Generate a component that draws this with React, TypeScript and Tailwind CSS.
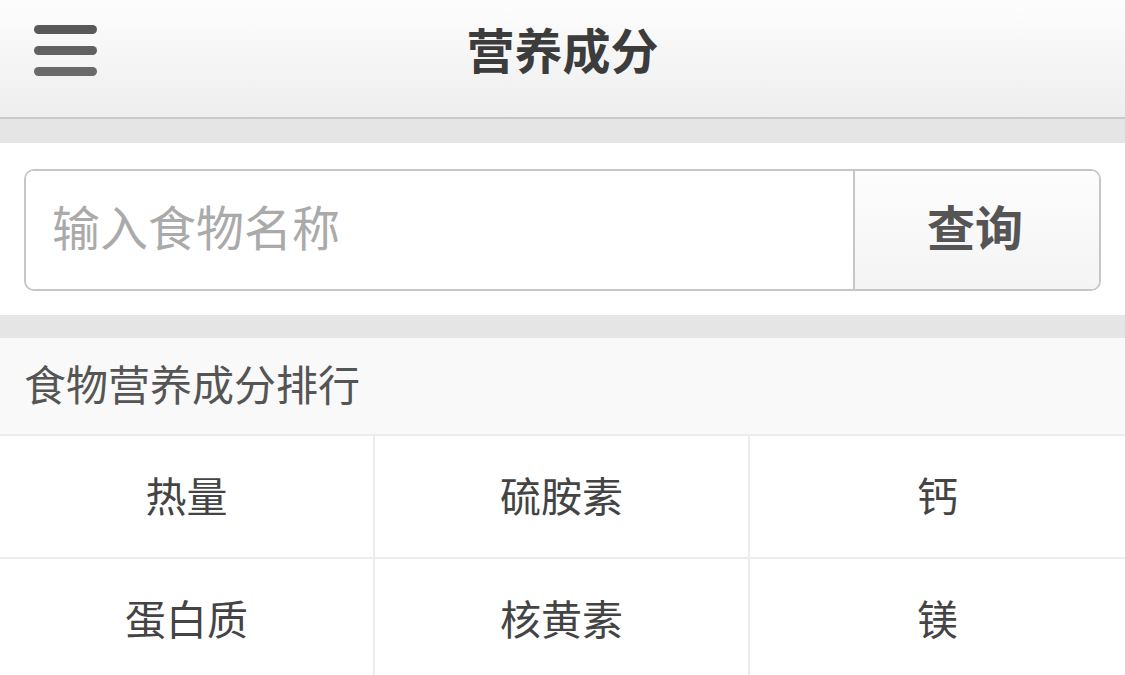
import React from 'react';

const items = ['热量', '硫胺素', '钙', '蛋白质', '核黄素', '镁'];

export default function App() {
  return (
    <div className="w-[1125px] h-[675px] overflow-hidden bg-white" style={{ fontFamily: '"Noto Sans CJK SC", "Noto Sans", sans-serif' }}>
      {/* Header */}
      <div className="relative h-[119px] flex items-center justify-center bg-gradient-to-b from-[#fdfdfd] to-[#eeeeee] border-b-2 border-[#c9c9c9]">
        <div className="absolute left-[34px] top-[25px] flex flex-col gap-[12px]">
          <div className="w-[63px] h-[9px] rounded-full bg-[#595959]" />
          <div className="w-[63px] h-[9px] rounded-full bg-[#616161]" />
          <div className="w-[63px] h-[9px] rounded-full bg-[#6a6a6a]" />
        </div>
        <h1 className="text-[48px] font-bold text-[#3c3c3c] leading-none -mt-[22px]">营养成分</h1>
      </div>

      <div className="h-[24px] bg-[#e5e5e5]" />

      {/* Search */}
      <div className="h-[172px] flex items-center px-[24px] pt-[2px]">
        <div className="flex w-[1077px] h-[122px] border-2 border-[#c6c6c6] rounded-[10px] overflow-hidden">
          <div className="flex-1 flex items-center pl-[26px] bg-white">
            <span className="text-[48px] text-[#aaaaaa] leading-none -mt-[10px]">输入食物名称</span>
          </div>
          <button className="w-[246px] border-l-2 border-[#c6c6c6] bg-gradient-to-b from-[#fdfdfd] to-[#f4f4f4] flex items-center justify-center">
            <span className="text-[48px] font-bold text-[#555555] leading-none -mt-[10px] -ml-[4px]">查询</span>
          </button>
        </div>
      </div>

      <div className="h-[23px] bg-[#e5e5e5]" />

      {/* Section title */}
      <div className="h-[98px] flex items-center px-[24px] bg-[#f9f9f9] border-b-2 border-[#ececec]">
        <span className="text-[42px] text-[#555555] leading-none -mt-[6px]">食物营养成分排行</span>
      </div>

      {/* Grid */}
      <div className="grid grid-cols-3">
        {items.map((t, i) => (
          <div
            key={t}
            className={`h-[123px] flex items-center justify-center border-b-2 border-[#ececec] ${i % 3 !== 2 ? 'border-r-2' : ''}`}
          >
            <span className="text-[41px] text-[#444444] leading-none -mt-[4px]">{t}</span>
          </div>
        ))}
      </div>
    </div>
  );
}
